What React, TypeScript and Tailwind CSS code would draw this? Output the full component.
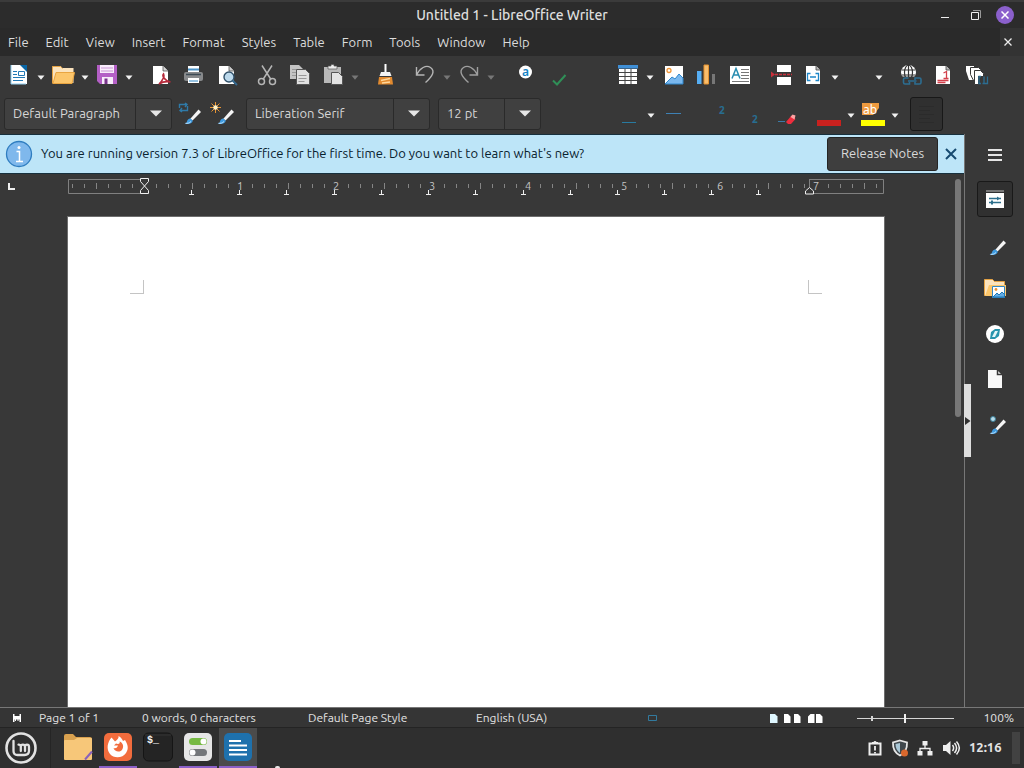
import React from "react";

type IconProps = { children: React.ReactNode; size?: number };

function Icon({ children, size = 24 }: IconProps) {
  return (
    <svg width={size} height={size} viewBox={`0 0 ${size} ${size}`} fill="none" aria-hidden="true" className="shrink-0 overflow-visible">
      {children}
    </svg>
  );
}

function Caret({ label, dim = false }: { label: string; dim?: boolean }) {
  return (
    <button type="button" aria-label={label} className="flex h-8 w-3 shrink-0 items-center justify-center">
      <svg width="8" height="5" viewBox="0 0 8 5" aria-hidden="true" className="mt-1">
        <path d="M0.5 0.5h7L4 4.7z" fill={dim ? "#777" : "#f2f2f2"} />
      </svg>
    </button>
  );
}

function Tool({ label, children }: { label: string; children?: React.ReactNode }) {
  return (
    <button type="button" aria-label={label} className="flex h-8 w-8 shrink-0 items-center justify-center">
      <Icon>{children}</Icon>
    </button>
  );
}

function Group({ children }: { children: React.ReactNode }) {
  return <div className="flex shrink-0 items-center">{children}</div>;
}

function Brush() {
  return (
    <>
      <path d="M19.5 4.5L22 7l-8.500 8.500-2.200-1.800z" transform="translate(-2 1)" fill="#f5f5f5" />
      <path d="M9.500 14.500l2.300 2.200c-.6 2.600-3.600 3.800-8.300 3.300 2-.6 2.200-1.600 2.600-3 .6-1.800 2-2.800 3.400-2.500z" fill="#3f9be0" />
      <path d="M4.500 19.300c2 .2 4-.2 5.500-1.800" stroke="#bfe2fa" />
    </>
  );
}

function Combo({ label, value, field }: { label: string; value: string; field: string }) {
  return (
    <div className="flex h-8 shrink-0 rounded-[3px] border border-[#2a2a2a] bg-[#404040]">
      <input aria-label={label} defaultValue={value} className={`${field} bg-transparent px-2 text-[13px] text-[#d6d6d6] outline-none`} />
      <button type="button" aria-label={`${label} list`} className="flex w-9 items-center justify-center border-l border-[#2a2a2a] pl-1">
        <svg width="12" height="7" viewBox="0 0 12 7" aria-hidden="true">
          <path d="M0 0.500h12L6 6.500z" fill="#e6e6e6" />
        </svg>
      </button>
    </div>
  );
}

function StandardToolbar() {
  return (
    <div role="toolbar" aria-label="Standard" className="flex h-[39px] shrink-0 items-center overflow-hidden pb-px pl-[3px]">
      <Group>
        <Tool label="New">
          <path d="M4 2h12l4 4v15H4z" fill="#fff" />
          <path d="M13 2h7v7z" fill="#0a66a5" />
          <path d="M4 2v19h15" stroke="#8fcdf0" />
          <path d="M6 8.500h4M6 11.500h4M6 14.500h12M6 17.500h10" stroke="#2279b5" />
          <path d="M11.500 8.500h6v4h-6z" stroke="#2279b5" />
        </Tool>
        <Caret label="New menu" />
        <Tool label="Open">
          <path d="M1.500 3h8l2 2h11v15h-21z" fill="#fbe3bd" />
          <path d="M1.500 20.500V3.500h8l2 2" stroke="#e5a243" />
          <path d="M5 9.500h18.500L21 20.500H2z" fill="#fcc66b" stroke="#e9a541" />
        </Tool>
        <Caret label="Open menu" />
        <Tool label="Save">
          <path d="M2 2h20v19H5l-3-3z" fill="#b45fc6" />
          <path d="M5 2h14v8H5z" fill="#f8ecfb" />
          <path d="M6 5h12M6 8h12" stroke="#c995d4" />
          <path d="M7 14h11v7H7z" fill="#f8ecfb" />
          <path d="M9.500 15.500h3V21h-3z" fill="#79348a" />
        </Tool>
        <Caret label="Save menu" />
      </Group>
      <div className="ml-[9px] flex gap-px">
        <Tool label="Export as PDF">
          <path d="M5 3h10l5 5v13H5z" fill="#fff" />
          <path d="M15 3v5h5" fill="#d5d5d5" stroke="#444" strokeWidth=".7" />
          <path d="M11 21c4-4 5.500-8 4.500-10-1.500 1.500 1 7 7 8-4-.8-8-.2-11.500 2z" stroke="#b5293a" strokeWidth="1.700" />
        </Tool>
        <Tool label="Print">
          <path d="M7 3h11v8H7z" fill="#fff" />
          <path d="M7 6.500h11" stroke="#4b94c9" strokeWidth="2" />
          <rect x="3" y="9" width="19" height="9" rx="2" fill="#87898b" />
          <path d="M5 11.500h15" stroke="#3c4a54" strokeWidth="1.500" />
          <path d="M7 15h11v5H7z" fill="#fff" />
          <path d="M8 18h9" stroke="#2e86c4" />
        </Tool>
        <Tool label="Print Preview">
          <path d="M5 3h10l5 5v13H5z" fill="#fff" />
          <path d="M15 3v5h5" fill="#ccc" stroke="#444" strokeWidth=".7" />
          <circle cx="15" cy="14" r="5" fill="#bcd9ec" stroke="#31516a" strokeWidth="1.400" />
          <path d="M18.500 17.500l4.500 4.500" stroke="#34688e" strokeWidth="2" />
        </Tool>
      </div>
      <div className="ml-[9px] flex gap-px">
        <Tool label="Cut">
          <g stroke="#b5b5b5" strokeWidth="1.500">
            <path d="M7 2.500l9 14M17 2.500l-9 14" />
            <circle cx="6.500" cy="18.500" r="3" />
            <circle cx="17.500" cy="18.500" r="3" />
          </g>
        </Tool>
        <Tool label="Copy">
          <path d="M2 2h9l4 4v10H2z" fill="#c4c4c4" />
          <path d="M8.500 6.500h9l4 4v11h-13z" fill="#e0e0e0" stroke="#555" />
          <path d="M10.500 12.500h8M10.500 15.500h8M10.500 18.500h6M4 6.500h4M4 9.500h4M4 12.500h4" stroke="#999" />
        </Tool>
        <Group>
          <Tool label="Paste">
            <path d="M3 4h17v16H3z" fill="#b8b8b8" />
            <path d="M7 6V3h3V1.500h3V3h3v3z" fill="#ececec" stroke="#555" strokeWidth=".7" />
            <path d="M10.500 9.500h7l4 4v8h-11z" fill="#e3e3e3" stroke="#555" />
          </Tool>
          <Caret label="Paste menu" dim />
        </Group>
      </div>
      <div className="ml-[8px] flex">
        <Tool label="Clone Formatting">
          <path d="M11.500 1h2v8h-2z" fill="#fff" />
          <path d="M8 9h9l1.500 4h-12z" fill="#f4f4f4" />
          <path d="M6 14h13l1 7.500H5z" fill="#e28a2f" />
          <path d="M8 17.500l9-2M9 20l8-1" stroke="#ffd79b" strokeWidth="1.500" />
        </Tool>
      </div>
      <div className="ml-[8px] flex">
        <Tool label="Undo">
          <path d="M3.500 4v8h8M3.500 12C7 5 13 1.500 17.500 4.500c5 3.500 2 9-5 15" stroke="#b5b5b5" strokeWidth="1.400" />
        </Tool>
        <Caret label="Undo list" dim />
        <Tool label="Redo">
          <path d="M20.500 4v8h-8M20.500 12C17 5 11 1.500 6.500 4.500c-5 3.500-2 9 5 15" stroke="#9f9f9f" strokeWidth="1.400" />
        </Tool>
        <Caret label="Redo list" dim />
      </div>
      <div className="ml-[12px] flex gap-[2px]">
        <Tool label="Find and Replace">
          <circle cx="12.500" cy="9" r="6.500" fill="#fff" />
          <text x="12.500" y="13" textAnchor="middle" fontFamily="Noto Sans, sans-serif" fontSize="12" fontWeight="600" fill="#1682c4">a</text>
        </Tool>
        <Tool label="Spelling">
          <path d="M6 17.500l4 4L18.500 12" stroke="#2f8f57" strokeWidth="2" />
        </Tool>
      </div>
      <div className="ml-[37px] flex">
        <Tool label="Insert Table">
          <path d="M2 2h20v3.500H2z" fill="#3f8fd6" />
          <path d="M3 6h18v15H3z" fill="#fff" />
          <path d="M3 9.500h18M3 13.500h18M3 17.500h18M9 6v15M15 6v15" stroke="#444" />
        </Tool>
        <Caret label="Insert Table size" />
      </div>
      <div className="ml-[2px] flex">
        <Tool label="Insert Image">
          <path d="M3 3h18v18H3z" fill="#fff" />
          <circle cx="7" cy="7.500" r="2" stroke="#f0973a" strokeWidth="1.300" />
          <path d="M3 21l7-7 3 2 4-5 4 4v6z" fill="#7ab8ee" stroke="#2f87cd" />
        </Tool>
        <Tool label="Insert Chart">
          <path d="M3 8h4.500v13H3z" fill="#56aef3" />
          <path d="M10 2h4.500v19H10z" fill="#f8bd6c" stroke="#e39230" />
          <path d="M18 11h3v10h-3z" fill="#777" />
        </Tool>
      </div>
      <div className="ml-[2px] flex">
        <Tool label="Insert Text Box">
          <path d="M2 3h20v18H2z" fill="#fff" />
          <path d="M4 15.500L8 5.500l4 10M5.500 12h5" stroke="#278cb0" strokeWidth="1.500" />
          <path d="M13 6.500h8M13 9.500h8M13 12.500h8M13 15.500h8M4 18.500h17" stroke="#777" />
        </Tool>
      </div>
      <div className="ml-[10px] flex">
        <Tool label="Insert Page Break">
          <path d="M7 2h14v7H7zM7 14h14v8H7z" fill="#fff" />
          <path d="M5 11.500h17" stroke="#c9303c" strokeWidth="1.400" strokeDasharray="3 1" />
          <path d="M1 8.500l4 3L1 14.500z" fill="#c9303c" />
        </Tool>
        <Tool label="Insert Field">
          <path d="M4 3h10l4 4v14H4z" fill="#fff" />
          <path d="M14 3v4h4" fill="#bbb" stroke="#444" strokeWidth=".8" />
          <path d="M8.500 10.500h-3v7h3M13.500 10.500h3v7h-3M8 14h6" stroke="#1e86c7" strokeWidth="1.300" />
        </Tool>
        <div className="-ml-px flex">
          <Caret label="Insert Field menu" />
          <Tool label="Insert Special Character" />
          <Caret label="Special Character menu" />
        </div>
      </div>
      <div className="ml-[9px] flex gap-px">
        <Tool label="Insert Hyperlink">
          <circle cx="10.500" cy="9.500" r="7.500" fill="#fff" />
          <path d="M3.500 7h14M3.500 12h14M10.500 2v15" stroke="#333" strokeWidth="1.200" />
          <ellipse cx="10.500" cy="9.500" rx="4" ry="7.500" stroke="#333" strokeWidth="1.200" />
          <path d="M4 13.500h19V22H4z" fill="#383838" />
          <path d="M10.500 15H7a1.500 1.500 0 00-1.500 1.500v3A1.500 1.500 0 007 21h4.500v-2M17 17v-2h4.500a1.500 1.500 0 011.500 1.500v3a1.500 1.500 0 01-1.500 1.500H17v-2M10 18h8.500" stroke="#2c6d91" strokeWidth="1.600" />
        </Tool>
        <Tool label="Insert Footnote">
          <path d="M5 3h10l4 4v14H5z" fill="#fff" />
          <path d="M15 3v4h4" fill="#bbb" stroke="#444" strokeWidth=".8" />
          <path d="M12.500 10l3-1.500v7M12.500 15.500h5M6.500 17.500h11M6.500 19.500h8" stroke="#d3404c" strokeWidth="1.300" />
        </Tool>
        <Tool label="Insert Cross-reference">
          <path d="M2 3h8v14H5L2 8z" fill="#fff" />
          <path d="M6.500 4.500h8l2 2v13h-6l-4-8z" fill="#fff" stroke="#383838" />
          <path d="M10.500 7.500h6l3 3v11h-9z" fill="#fff" stroke="#383838" />
          <path d="M14 13h10v9H14z" fill="#383838" />
          <path d="M17 13.500h-2v7h2M20 13.500v7M18.500 20.500h5v-7" stroke="#2c6d91" strokeWidth="1.300" />
        </Tool>
      </div>
    </div>
  );
}

function FormattingToolbar() {
  return (
    <div role="toolbar" aria-label="Formatting" className="flex h-[39px] shrink-0 items-center overflow-hidden pb-[2px] pl-1">
      <Combo label="Paragraph Style" value="Default Paragraph" field="w-[130px]" />
      <div className="ml-[2px] flex">
        <Tool label="Update Style">
          <g stroke="#2f7aa8" strokeWidth="1.400">
            <path d="M1.500 6V2.500h7M9.500 4v4.500h-7M7 1l2 1.500L7 5M4 6L2 8.500 4 10" />
          </g>
          <g transform="translate(3 2)"><Brush /></g>
        </Tool>
        <Tool label="New Style">
          <path d="M5.500 0v11M0 5.500h11M1.500 1.500l8 8M9.500 1.500l-8 8" stroke="#e89432" />
          <circle cx="5.500" cy="5.500" r="2.200" fill="#fff3c8" />
          <g transform="translate(4 2)"><Brush /></g>
        </Tool>
      </div>
      <div className="ml-[8px] flex gap-2">
        <Combo label="Font Name" value="Liberation Serif" field="w-[146px]" />
        <Combo label="Font Size" value="12 pt" field="w-[65px]" />
      </div>
      <div className="ml-[72px] flex">
        <Tool label="Underline">
          <path d="M5 20.500h14" stroke="#287aa0" />
        </Tool>
        <Caret label="Underline styles" />
        <Tool label="Strikethrough">
          <path d="M5 11.500h15" stroke="#3e81b5" />
        </Tool>
      </div>
      <div className="ml-[12px] flex gap-px">
        <Tool label="Superscript">
          <text x="14" y="12" fontFamily="Noto Sans, sans-serif" fontSize="10" fontWeight="700" fill="#286d91">2</text>
        </Tool>
        <Tool label="Subscript">
          <text x="14" y="21" fontFamily="Noto Sans, sans-serif" fontSize="10" fontWeight="700" fill="#286d91">2</text>
        </Tool>
        <Tool label="Clear Formatting">
          <path d="M7 19.500h7" stroke="#3a7aa8" />
          <path d="M15 20l5.500-6.500 4 3.500-4.500 5h-3z" fill="#ee2d3d" />
          <path d="M19.500 15l2-2.500 3 1-1 4z" fill="#ffa3a3" />
        </Tool>
      </div>
      <div className="ml-[14px] flex">
        <Tool label="Font Color">
          <path d="M0 18h24v6H0z" fill="#c9211e" />
        </Tool>
        <Caret label="Font Color menu" />
        <Tool label="Highlighting">
          <path d="M1 1h17v5l-6 7H1z" fill="#ee9a3f" />
          <text x="2" y="12" fontFamily="Noto Sans, sans-serif" fontSize="12" fill="#fff">ab</text>
          <path d="M0 18h24v6H0z" fill="#ffff00" />
        </Tool>
        <Caret label="Highlighting menu" />
      </div>
      <button type="button" aria-label="Align Left" aria-pressed="true" className="ml-[9px] flex h-[34px] w-[33px] shrink-0 items-center justify-center rounded-[3px] border border-[#181818] bg-[#303030]">
        <Icon>
          <path d="M4 4.500h15M4 8.500h11M4 12.500h15M4 16.500h11M4 20.500h15" stroke="#2b2b2b" />
        </Icon>
      </button>
    </div>
  );
}

function Ruler() {
  const ticks: number[] = [];
  for (let x = 5; x < 812; x += 12) ticks.push(x);
  const stops = [124, 172, 219, 267, 314, 361, 408, 456, 503, 550, 597, 644, 691];
  return (
    <svg viewBox="0 0 818 24" aria-label="Horizontal ruler" className="mx-auto block h-6 w-[818px] shrink-0" fill="none">
      <path d="M77.500 5.500h-76v14h76M742.500 5.500h74v14h-74" stroke="#808080" />
      {ticks.map((x, i) => {
        const step = i - 6;
        if (step === 0 || step === 62 - 6 || (step > 0 && step % 8 === 0)) return null;
        const tall = step % 4 === 0;
        return <path key={x} d={tall ? `M${x}.5 9v6` : `M${x}.5 10v4`} stroke="#858585" />;
      })}
      {[1, 2, 3, 4, 5, 6, 7].map((n) => (
        <text key={n} x={77 + n * 96} y="16" textAnchor="middle" fontFamily="Ubuntu, Noto Sans, sans-serif" fontSize="11" fill="#c4c4c4">{n}</text>
      ))}
      {stops.map((x) => (
        <path key={x} d={`M${x}.5 16v4M${x - 2} 20.500h5`} stroke="#efefef" />
      ))}
      <path d="M73.500 4.500h8v3l-4 4.500-4-4.500zM77.500 12l4 4.500v3h-8v-3z" fill="#383838" stroke="#efefef" />
      <path d="M742.500 5v8" stroke="#808080" />
      <path d="M742.500 13.500l4 3.500v3h-8v-3z" fill="#383838" stroke="#efefef" />
    </svg>
  );
}

function InfoBar() {
  return (
    <div role="status" className="flex h-[40px] shrink-0 items-center border-b border-t border-[#17303d] bg-[#bde5f8] pl-[5px] text-[#08212e]">
      <svg width="28" height="28" viewBox="0 0 28 28" aria-hidden="true" className="shrink-0">
        <circle cx="14" cy="14" r="12.500" fill="#7fb8ec" stroke="#2f7dc0" strokeWidth="1.300" />
        <path d="M11.500 11.500h3V21M11 21.500h7" fill="none" stroke="#fff" strokeWidth="1.500" />
        <circle cx="14" cy="7.500" r="1.500" fill="#fff" />
      </svg>
      <p className="ml-2 flex-1 whitespace-nowrap text-[13px]">You are running version 7.3 of LibreOffice for the first time. Do you want to learn what's new?</p>
      <button type="button" className="h-[34px] w-[111px] shrink-0 rounded-[3px] border border-[#252525] bg-[#3e3e3e] text-[13px] text-[#dadada]">Release Notes</button>
      <button type="button" aria-label="Close infobar" className="flex h-8 w-[26px] shrink-0 items-center justify-center">
        <svg width="12" height="12" viewBox="0 0 12 12" aria-hidden="true">
          <path d="M1 1l10 10M11 1L1 11" stroke="#174a70" strokeWidth="2" />
        </svg>
      </button>
    </div>
  );
}

function SideButton({ label, active = false, children }: { label: string; active?: boolean; children: React.ReactNode }) {
  return (
    <button
      type="button"
      aria-label={label}
      className={`flex h-9 w-9 shrink-0 items-center justify-center rounded-[3px] border ${active ? "border-[#191919] bg-[#303030]" : "border-transparent"}`}
    >
      <Icon>{children}</Icon>
    </button>
  );
}

function Sidebar() {
  return (
    <nav aria-label="Sidebar" className="relative flex w-[60px] shrink-0 flex-col items-center gap-[9px] border-l border-[#777] pl-px pt-[2px]">
      <SideButton label="Sidebar Settings">
        <path d="M5 8h14M5 13h14M5 18h14" stroke="#e6e6e6" strokeWidth="2" />
      </SideButton>
      <SideButton label="Properties" active>
        <path d="M3 3h18v2H3z" fill="#777" />
        <path d="M3 6h18v15H3z" fill="#fff" />
        <path d="M6 11.500h12M6 15.500h12" stroke="#2d6f8c" strokeWidth="1.300" />
        <path d="M14 9.500l3 2-3 2zM8 13.500h2v4H8z" fill="#2d6f8c" />
      </SideButton>
      <SideButton label="Styles">
        <g transform="translate(3 3)"><Brush /></g>
      </SideButton>
      <SideButton label="Gallery">
        <path d="M1.500 2.500h8l2 2h10v14h-20z" fill="#fbe3bd" stroke="#e5a243" />
        <path d="M6 8h17v11H2z" fill="#fcc66b" />
        <path d="M9.500 9.500h12v11h-12z" fill="#fff" stroke="#3187c4" />
        <circle cx="13" cy="12.500" r="1.400" fill="#eb9435" />
        <path d="M10 20l4-4 2 2 3-3 2.500 2.500V20z" fill="#63ade8" stroke="#1f79b5" />
      </SideButton>
      <SideButton label="Navigator">
        <circle cx="12" cy="12" r="9" fill="#fff" />
        <path d="M17 7l-1 7-4 3-5 0 1-7 4-3z" fill="#2794ad" />
        <path d="M15 9l-3 6-3 0 3-6z" fill="#e4f5f8" />
      </SideButton>
      <SideButton label="Page">
        <path d="M5 3h9l5 5v13H5z" fill="#f8f8f8" />
        <path d="M14.500 3v4.500H19" stroke="#383838" strokeWidth="1.500" />
      </SideButton>
      <SideButton label="Style Inspector">
        <circle cx="10" cy="7" r="2.500" fill="#b8dceb" stroke="#3d8099" />
        <g transform="translate(3 2)"><Brush /></g>
      </SideButton>
      <button type="button" aria-label="Hide sidebar" className="absolute -left-px top-[44%] flex h-[73px] w-[7px] -translate-y-0.5 items-center bg-[#dedede]">
        <svg width="6" height="8" viewBox="0 0 6 8" aria-hidden="true" className="ml-px"><path d="M0 0l5.500 4L0 8z" fill="#303030" /></svg>
      </button>
    </nav>
  );
}

function StatusBar() {
  return (
    <footer className="flex h-[21px] shrink-0 items-center whitespace-nowrap border-b border-t border-b-[#242424] border-t-[#777] bg-[#353535] pt-px text-[12px] text-[#e2e2e2]">
      <div className="flex w-[39px] items-center pl-3">
        <svg width="10" height="8" viewBox="0 0 10 8" aria-label="Document not modified">
          <path d="M1 0h1.500v2h5V0H9v8H7.500V5.500h-1V7h-1V5.500H4V7H3V5.500h-.5V8H1z" fill="#fff" />
        </svg>
      </div>
      <span className="w-[103px]">Page 1 of 1</span>
      <span className="w-[166px]">0 words, 0 characters</span>
      <span className="w-[168px]">Default Page Style</span>
      <span>English (USA)</span>
      <div className="ml-auto flex items-center">
        <button type="button" aria-label="Selection mode" className="mr-[112px]">
          <svg width="10" height="7" viewBox="0 0 10 7" fill="none"><path d="M.5.500h8v5h-8z" stroke="#327a9e" /></svg>
        </button>
        <button type="button" aria-label="Single-page view" className="mr-[6px]">
          <svg width="8" height="9" viewBox="0 0 8 9"><path d="M0 0h5l2.500 2.500V9H0z" fill="#dff7ff" /></svg>
        </button>
        <button type="button" aria-label="Multiple-page view" className="mr-[7px]">
          <svg width="17" height="9" viewBox="0 0 17 9"><path d="M0 0h4l2.500 2.500V9H0zM10 0h4l2.500 2.500V9H10z" fill="#fff" /></svg>
        </button>
        <button type="button" aria-label="Book view" className="mr-[34px]">
          <svg width="15" height="9" viewBox="0 0 15 9"><path d="M2.500 0H6.500V9H0V2.500zM8 0h4l2.500 2.500V9H8z" fill="#fff" /></svg>
        </button>
        <div className="relative flex items-center">
          <input
            type="range"
            aria-label="Zoom"
            defaultValue={49}
            className="h-px w-[97px] appearance-none bg-[#d6d6d6] [&::-webkit-slider-thumb]:h-[9px] [&::-webkit-slider-thumb]:w-[2px] [&::-webkit-slider-thumb]:appearance-none [&::-webkit-slider-thumb]:bg-[#efefef]"
          />
          <span className="absolute left-[14px] h-[5px] w-[2px] bg-[#d6d6d6]" />
        </div>
        <span className="w-[70px] pr-[10px] text-right">100%</span>
      </div>
    </footer>
  );
}

function TaskButton({ label, running = false, active = false, children }: { label: string; running?: boolean; active?: boolean; children: React.ReactNode }) {
  return (
    <button
      type="button"
      aria-label={label}
      className={`flex h-full w-[38px] items-center justify-center border-b-2 ${running ? "border-[#8a5fc7]" : "border-transparent"} ${active ? "bg-[#4b4b4b]" : ""}`}
    >
      <svg width="30" height="30" viewBox="0 0 30 30" fill="none" aria-hidden="true" className="shrink-0">
        {children}
      </svg>
    </button>
  );
}

function Taskbar() {
  return (
    <div className="relative flex h-[40px] shrink-0 items-center bg-[#2f2f2f]">
      <button type="button" aria-label="Menu" className="flex h-full w-[51px] items-center border-r border-[#252525] pl-[4px]">
        <svg width="34" height="34" viewBox="0 0 34 34" fill="none" aria-hidden="true">
          <circle cx="17" cy="17" r="14.500" stroke="#e2e2e2" strokeWidth="2.600" />
          <path d="M9.500 10v10c0 2.500 1.500 4 4 4h7c2.800 0 4.500-1.600 4.500-4.200v-4c0-3-4-3-4 0V20m0-4.200c0-3-4.200-3-4.200 0V20m0-4.200c0-1.600-1-2.300-2.300-2.100" stroke="#e2e2e2" strokeWidth="2.300" strokeLinecap="round" />
        </svg>
      </button>
      <div className="ml-[8px] flex h-full gap-[2px]">
        <TaskButton label="Files">
          <path d="M1 4q0-2 2-2h7l3 3h14q2 0 2 2v17H1z" fill="#d9a14f" />
          <path d="M1 9q0-1 1-1h9l3-2h14q1 0 1 1v20q0 1-1 1H2q-1 0-1-1z" fill="#f7c779" />
          <path d="M22 27.500l7-8" stroke="#8962ba" strokeWidth="2" />
        </TaskButton>
        <TaskButton label="Firefox" running>
          <rect x="1" y="1" width="28" height="28" rx="5" fill="#f26c3d" />
          <path d="M8.500 5.500l3.500 4c3-2 4-4 3.500-5.500 3 1.500 4 4 4.500 5l2-1c4 6 3 10 1 13-3 5-12 6-16 1C3 17 4.500 10 8.500 5.500z" fill="#fff" />
          <path d="M13 11.500l-2 2h4c-1 3-3 3-4.500 2.500 1 4 7 5 9 1s-1-7-3-7.500c1 2-1 3-3.500 2z" fill="#f26c3d" />
        </TaskButton>
        <TaskButton label="Terminal">
          <rect x=".500" y="1" width="29" height="28" rx="5" fill="#242424" stroke="#151515" />
          <path d="M2 3h26" stroke="#343434" />
          <text x="4" y="11" fontFamily="Liberation Mono, monospace" fontSize="10" fontWeight="700" fill="#f5f5f5">$_</text>
        </TaskButton>
        <TaskButton label="System Settings" running>
          <rect x="1" y="1" width="28" height="28" rx="5" fill="#e6e6e6" />
          <rect x="6" y="6" width="18" height="7" rx="3.500" fill="#76b943" />
          <circle cx="20.500" cy="9.500" r="3" fill="#fff" />
          <rect x="6" y="17" width="18" height="7" rx="3.500" fill="#74777a" />
          <circle cx="9.500" cy="20.500" r="3" fill="#fff" />
        </TaskButton>
        <TaskButton label="LibreOffice Writer" running active>
          <rect x="1" y="1" width="28" height="28" rx="5" fill="#1e71ad" />
          <path d="M6 9h12M6 13.500h18M6 18h18M6 22.500h18" stroke="#fff" strokeWidth="2" />
        </TaskButton>
      </div>
      <span className="absolute bottom-0 left-[275px] h-[2px] w-[5px] rounded-t-full bg-[#e6e6e6]" />
      <div className="ml-auto flex items-center gap-[5px]">
        <button type="button" aria-label="System reports">
          <Icon size={20}>
            <path d="M4.500 5.500h11v11h-11z" stroke="#eee" strokeWidth="2" />
            <path d="M7 6V4h1.500a1.600 1.600 0 013 0H13v2z" fill="#eee" />
            <path d="M10 8v4.500M10 14v1.500" stroke="#eee" strokeWidth="1.800" />
          </Icon>
        </button>
        <button type="button" aria-label="Update Manager">
          <Icon size={20}>
            <path d="M10 2.500l7 2c.3 6-2 10.500-7 13-5-2.500-7.300-7-7-13z" fill="#40484d" stroke="#e6e6e6" strokeWidth="1.800" />
            <path d="M10 5v10c-3-2-4.500-5-4.500-9z" fill="#a9c7d6" />
            <circle cx="14.500" cy="15" r="3.500" fill="#d9682d" />
          </Icon>
        </button>
        <button type="button" aria-label="Network">
          <Icon size={20}>
            <path d="M7.500 3h5v4.500h-5zM2.500 13h5v4.500h-5zM12.500 13h5v4.500h-5z" fill="#eee" />
            <path d="M10 7v4M5 14v-3.500h10V14" stroke="#eee" strokeWidth="1.300" />
          </Icon>
        </button>
        <button type="button" aria-label="Volume" className="ml-px">
          <Icon size={20}>
            <path d="M2 7h3l4.500-4v14L5 13H2z" fill="#eee" />
            <path d="M11.500 7c1.500 2 1.500 4 0 6M13.500 5c2.500 3 2.500 7 0 10M15.500 3.500c3.500 4 3.500 9 0 13" stroke="#eee" strokeWidth="1.500" />
          </Icon>
        </button>
        <time className="ml-[3px] w-[38px] whitespace-nowrap text-[13px] font-bold text-[#e4e4e4]">12:16</time>
        <button type="button" aria-label="Show desktop" className="mr-1 h-8 w-2 bg-[#424242]" />
      </div>
    </div>
  );
}

const menus = ["File", "Edit", "View", "Insert", "Format", "Styles", "Table", "Form", "Tools", "Window", "Help"];

export default function App() {
  return (
    <div className="flex h-screen flex-col overflow-hidden bg-[#383838] font-['Ubuntu','Noto_Sans',sans-serif]">
      <header className="relative flex h-7 shrink-0 items-center justify-center border-t-2 border-[#3b3b3b] bg-[#2c2c2c]">
        <h1 className="text-[14px] font-medium text-[#dedede]">Untitled 1 - LibreOffice Writer</h1>
        <div className="absolute right-[10px] flex items-center gap-[12px]">
          <button type="button" aria-label="Minimize" className="flex h-[18px] w-[18px] items-center justify-center">
            <svg width="8" height="8" viewBox="0 0 8 8"><path d="M0 6.500h8" stroke="#eee" strokeWidth="1" /></svg>
          </button>
          <button type="button" aria-label="Restore" className="flex h-[18px] w-[18px] items-center justify-center">
            <svg width="11" height="11" viewBox="0 0 11 11" fill="none"><path d="M1.500 2.500h7v7h-7z" stroke="#eee" /><path d="M3 .5h7.500V8" stroke="#999" /></svg>
          </button>
          <button type="button" aria-label="Close" className="flex h-[18px] w-[18px] items-center justify-center rounded-full bg-[#8b60cc]">
            <svg width="8" height="8" viewBox="0 0 8 8"><path d="M.5.500l7 7M7.500.500l-7 7" stroke="#fff" strokeWidth="1.500" /></svg>
          </button>
        </div>
      </header>
      <nav aria-label="Menu bar" className="flex h-7 shrink-0 items-center bg-[#2a2a2a] pl-[8px] text-[13px] text-[#dcdcdc]">
        <div className="flex gap-[17px] pt-px">
          {menus.map((m) => (
            <button key={m} type="button">{m}</button>
          ))}
        </div>
        <button type="button" aria-label="Close document" className="ml-auto flex h-full w-6 items-center bg-[#333333] pl-1">
          <svg width="8" height="8" viewBox="0 0 8 8"><path d="M.5.500l7 7M7.500.500l-7 7" stroke="#eee" strokeWidth="1.300" /></svg>
        </button>
      </nav>
      <StandardToolbar />
      <FormattingToolbar />
      <div className="flex min-h-0 flex-1">
        <main className="flex min-w-0 flex-1 flex-col">
          <InfoBar />
          <div className="flex min-h-0 flex-1">
            <div className="relative flex min-w-0 flex-1 flex-col">
              <Ruler />
              <svg width="8" height="8" viewBox="0 0 8 8" aria-hidden="true" className="absolute left-2 top-[9px]">
                <path d="M1 0v6h6" fill="none" stroke="#eee" strokeWidth="2" />
              </svg>
              <section aria-label="Document" contentEditable suppressContentEditableWarning className="mx-auto mt-[18px] flex w-[818px] flex-1 items-start justify-between border-x border-t border-[#6d6d6d] bg-white px-[62px] pt-[63px] outline-none">
                <span className="h-[14px] w-[14px] border-b border-r border-[#c4c4c4]" />
                <span className="h-[14px] w-[14px] border-b border-l border-[#c4c4c4]" />
              </section>
            </div>
            <div className="w-3 shrink-0 pl-[3px] pt-[5px]">
              <div className="h-[45%] w-[6px] rounded-full bg-[#777]" />
            </div>
          </div>
        </main>
        <Sidebar />
      </div>
      <StatusBar />
      <Taskbar />
    </div>
  );
}
